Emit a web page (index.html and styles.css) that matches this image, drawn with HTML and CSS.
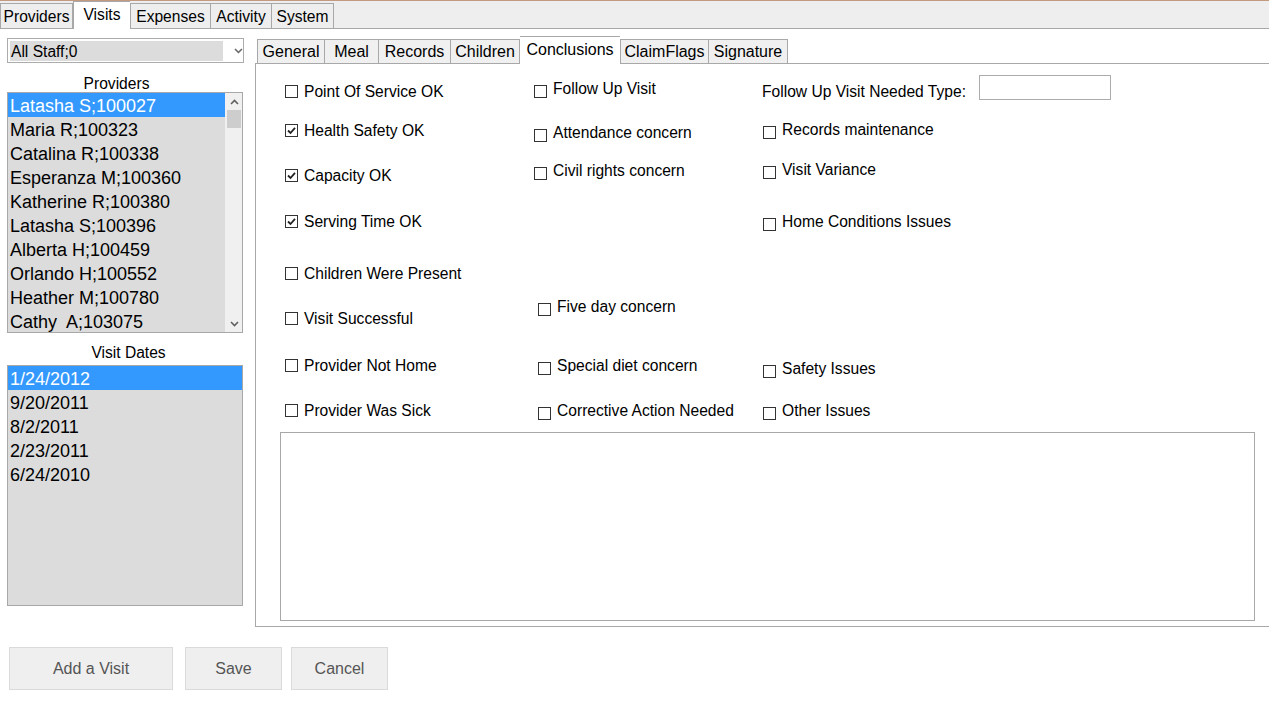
FILE: index.html
```html
<!DOCTYPE html>
<html>
<head>
<meta charset="utf-8">
<link rel="stylesheet" href="styles.css">
</head>
<body>
<div class="topbar">
  <div class="tab t-providers">Providers</div>
  <div class="tab tab-sel t-visits">Visits</div>
  <div class="tab t-expenses">Expenses</div>
  <div class="tab t-activity">Activity</div>
  <div class="tab t-system">System</div>
</div>

<div class="main">
  <div class="left">
    <div class="select">
      <div class="select-field">All Staff;0</div>
      <svg class="select-arrow" width="9" height="6" viewBox="0 0 9 6"><path d="M1 1 L4.5 4.5 L8 1" fill="none" stroke="#666" stroke-width="1.6"/></svg>
    </div>

    <div class="list-label prov-label">Providers</div>
    <div class="listbox">
      <div class="items">
        <div class="item sel">Latasha S;100027</div>
        <div class="item">Maria R;100323</div>
        <div class="item">Catalina R;100338</div>
        <div class="item">Esperanza M;100360</div>
        <div class="item">Katherine R;100380</div>
        <div class="item">Latasha S;100396</div>
        <div class="item">Alberta H;100459</div>
        <div class="item">Orlando H;100552</div>
        <div class="item">Heather M;100780</div>
        <div class="item">Cathy&nbsp; A;103075</div>
      </div>
      <div class="scrollbar">
        <div class="sb-btn"><svg width="9" height="6" viewBox="0 0 9 6"><path d="M1 5 L4.5 1.5 L8 5" fill="none" stroke="#606060" stroke-width="1.6"/></svg></div>
        <div class="sb-thumb"></div>
        <div class="sb-track"></div>
        <div class="sb-btn"><svg width="9" height="6" viewBox="0 0 9 6"><path d="M1 1 L4.5 4.5 L8 1" fill="none" stroke="#606060" stroke-width="1.6"/></svg></div>
      </div>
    </div>

    <div class="list-label dates-label">Visit Dates</div>
    <div class="listbox">
      <div class="items">
        <div class="item sel">1/24/2012</div>
        <div class="item">9/20/2011</div>
        <div class="item">8/2/2011</div>
        <div class="item">2/23/2011</div>
        <div class="item">6/24/2010</div>
      </div>
    </div>
  </div>

  <div class="right">
    <div class="subtabs">
      <div class="stab s-general">General</div>
      <div class="stab s-meal">Meal</div>
      <div class="stab s-records">Records</div>
      <div class="stab s-children">Children</div>
      <div class="stab stab-sel s-conclusions">Conclusions</div>
      <div class="stab s-claim">ClaimFlags</div>
      <div class="stab s-sig">Signature</div>
    </div>
    <div class="panel">
      <div class="checks">
        <div class="col col1">
          <label class="cb m17"><span class="box"></span>Point Of Service OK</label>
          <label class="cb m19"><span class="box checked"><svg width="11" height="11" viewBox="0 0 11 11"><path d="M2 5.5 L4.5 8 L9 2.8" fill="none" stroke="#222" stroke-width="1.8"/></svg></span>Health Safety OK</label>
          <label class="cb m25"><span class="box checked"><svg width="11" height="11" viewBox="0 0 11 11"><path d="M2 5.5 L4.5 8 L9 2.8" fill="none" stroke="#222" stroke-width="1.8"/></svg></span>Capacity OK</label>
          <label class="cb m26"><span class="box checked"><svg width="11" height="11" viewBox="0 0 11 11"><path d="M2 5.5 L4.5 8 L9 2.8" fill="none" stroke="#222" stroke-width="1.8"/></svg></span>Serving Time OK</label>
          <label class="cb m32"><span class="box"></span>Children Were Present</label>
          <label class="cb m25"><span class="box"></span>Visit Successful</label>
          <label class="cb m27"><span class="box"></span>Provider Not Home</label>
          <label class="cb m25"><span class="box"></span>Provider Was Sick</label>
        </div>
        <div class="col col2">
          <label class="cb low m14"><span class="box"></span>Follow Up Visit</label>
          <label class="cb low m24"><span class="box"></span>Attendance concern</label>
          <label class="cb low m18"><span class="box"></span>Civil rights concern</label>
          <label class="cb low ind m116"><span class="box"></span>Five day concern</label>
          <label class="cb low ind m39"><span class="box"></span>Special diet concern</label>
          <label class="cb low ind m25"><span class="box"></span>Corrective Action Needed</label>
        </div>
        <div class="col col3">
          <div class="fu-row">
            <span class="fu-label">Follow Up Visit Needed Type:</span>
            <span class="fu-input"></span>
          </div>
          <label class="cb low ind1 m19"><span class="box"></span>Records maintenance</label>
          <label class="cb low ind1 m20"><span class="box"></span>Visit Variance</label>
          <label class="cb low ind1 m32"><span class="box"></span>Home Conditions Issues</label>
          <label class="cb low ind1 m127"><span class="box"></span>Safety Issues</label>
          <label class="cb low ind1 m22"><span class="box"></span>Other Issues</label>
        </div>
      </div>
      <div class="notes"></div>
    </div>
  </div>
</div>

<div class="buttons">
  <div class="btn b-add">Add a Visit</div>
  <div class="btn b-save">Save</div>
  <div class="btn b-cancel">Cancel</div>
</div>
</body>
</html>
```

FILE: styles.css
```css
* { box-sizing: border-box; }
html, body { margin: 0; padding: 0; background: #fff; }
body {
  font-family: "Liberation Sans", Arial, sans-serif;
  color: #000;
  width: 1269px;
  height: 711px;
  overflow: hidden;
}

/* top tabs */
.topbar {
  display: flex;
  align-items: flex-end;
  height: 29px;
  background: #eeeeee;
  border-top: 1px solid #c29a7e;
  border-bottom: 1px solid #a8a8a8;
}
.tab {
  height: 25px;
  border: 1px solid #a8a8a8;
  border-bottom: none;
  border-left: none;
  background: #eeeeee;
  font-size: 15.6px;
  line-height: 26px;
  text-align: center;
  white-space: nowrap;
}
.t-providers { width: 73px; border-left: 1px solid #a8a8a8; }
.t-visits { width: 57px; }
.t-expenses { width: 81px; border-left: 1px solid #a8a8a8; }
.t-activity { width: 61px; }
.t-system { width: 62px; }
.tab-sel {
  height: 28px;
  margin-bottom: -1px;
  background: #fff;
  border: 1px solid #a8a8a8;
  border-bottom: none;
  border-right: none;
  line-height: 25px;
  position: relative;
  z-index: 1;
}

.main { display: flex; }

/* left column */
.left {
  width: 255px;
  flex: none;
  padding-left: 7px;
  padding-top: 9px;
}
.select {
  width: 237px;
  height: 25px;
  border: 1px solid #acacac;
  background: #fff;
  display: flex;
  align-items: center;
  padding: 0 0 0 2px;
}
.select-field {
  width: 215px;
  height: 20px;
  background: #dcdcdc;
  font-size: 15.6px;
  line-height: 21px;
  padding-left: 1px;
}
.select-arrow { margin-left: 11px; }

.list-label {
  font-size: 15.6px;
  height: 20px;
  line-height: 22px;
  text-align: center;
  width: 236px;
}
.prov-label { margin-top: 10px; padding-right: 17px; }
.dates-label { margin-top: 9px; padding-left: 7px; margin-bottom: 3px; }
.prov-label + .listbox { margin-top: -1px; }

.listbox {
  width: 236px;
  height: 241px;
  border: 1px solid #a8a8a8;
  background: #dcdcdc;
  display: flex;
  overflow: hidden;
}
.items { flex: 1; }
.item {
  height: 24px;
  font-size: 18px;
  line-height: 26px;
  padding-left: 2px;
  white-space: nowrap;
  overflow: hidden;
}
.item.sel { background: #3399ff; color: #fff; }

.scrollbar {
  width: 17px;
  flex: none;
  background: #f0f0f0;
  border-left: 1px solid #f0f0f0;
  display: flex;
  flex-direction: column;
}
.sb-btn {
  height: 17px;
  display: flex;
  align-items: center;
  justify-content: center;
}
.sb-thumb {
  height: 18px;
  margin: 0 1px;
  background: #cdcdcd;
}
.sb-track { flex: 1; }

/* right column */
.right {
  flex: 1;
  padding-top: 7px;
}
.subtabs {
  display: flex;
  align-items: flex-end;
  height: 27px;
  padding-left: 2px;
}
.stab {
  height: 24px;
  border: 1px solid #a8a8a8;
  border-bottom: none;
  border-left: none;
  background: #f0f0f0;
  font-size: 16px;
  line-height: 23px;
  text-align: center;
  white-space: nowrap;
}
.s-general { width: 68px; border-left: 1px solid #a8a8a8; }
.s-meal { width: 54px; }
.s-records { width: 72px; }
.s-children { width: 69px; }
.s-conclusions { width: 100px; }
.s-claim { width: 89px; border-left: none; }
.s-sig { width: 79px; }
.stab-sel {
  height: 28px;
  margin-bottom: -1px;
  background: #fff;
  border-right: none;
  line-height: 25px;
  position: relative;
  z-index: 1;
}
.stab-sel + .stab { border-left: 1px solid #a8a8a8; width: 89px; }

.panel {
  height: 564px;
  border-top: 1px solid #a8a8a8;
  border-left: 1px solid #a8a8a8;
  border-bottom: 1px solid #a8a8a8;
  background: #fff;
}
.checks {
  display: flex;
  height: 368px;
  padding-left: 29px;
}
.col { display: flex; flex-direction: column; align-items: flex-start; }
.col1 { width: 249px; }
.col2 { width: 228px; }
.col3 { flex: 1; }

.cb {
  display: flex;
  align-items: flex-start;
  height: 20px;
  font-size: 15.6px;
  line-height: 22px;
  white-space: nowrap;
  color: #000;
}
.box {
  width: 13px;
  height: 13px;
  flex: none;
  border: 1px solid #333;
  background: #fff;
  margin-top: 4px;
  margin-right: 6px;
  display: flex;
  align-items: center;
  justify-content: center;
}
.cb.low .box { margin-top: 7px; }
.cb.ind { padding-left: 4px; }
.cb.ind1 { padding-left: 1px; }

.m14 { margin-top: 14px; }
.m17 { margin-top: 17px; }
.m18 { margin-top: 18px; }
.m19 { margin-top: 19px; }
.m20 { margin-top: 20px; }
.m22 { margin-top: 22px; }
.m24 { margin-top: 24px; }
.m25 { margin-top: 25px; }
.m26 { margin-top: 26px; }
.m27 { margin-top: 27px; }
.m32 { margin-top: 32px; }
.m39 { margin-top: 39px; }
.m116 { margin-top: 116px; }
.m127 { margin-top: 127px; }

.fu-row {
  display: flex;
  align-items: flex-start;
  margin-top: 11px;
  height: 25px;
}
.fu-label {
  font-size: 15.6px;
  line-height: 22px;
  height: 20px;
  margin-top: 6px;
  white-space: nowrap;
  width: 217px;
}
.fu-input {
  width: 132px;
  height: 25px;
  border: 1px solid #acacac;
  background: #fff;
}

.notes {
  margin-left: 24px;
  width: 975px;
  height: 189px;
  border: 1px solid #a8a8a8;
  background: #fff;
}

/* buttons */
.buttons {
  display: flex;
  padding-left: 9px;
  margin-top: 20px;
}
.btn {
  height: 43px;
  background: #efefef;
  border: 1px solid #dadada;
  color: #555;
  font-size: 16px;
  line-height: 41px;
  text-align: center;
}
.b-add { width: 164px; }
.b-save { width: 97px; margin-left: 12px; }
.b-cancel { width: 97px; margin-left: 9px; }
```
